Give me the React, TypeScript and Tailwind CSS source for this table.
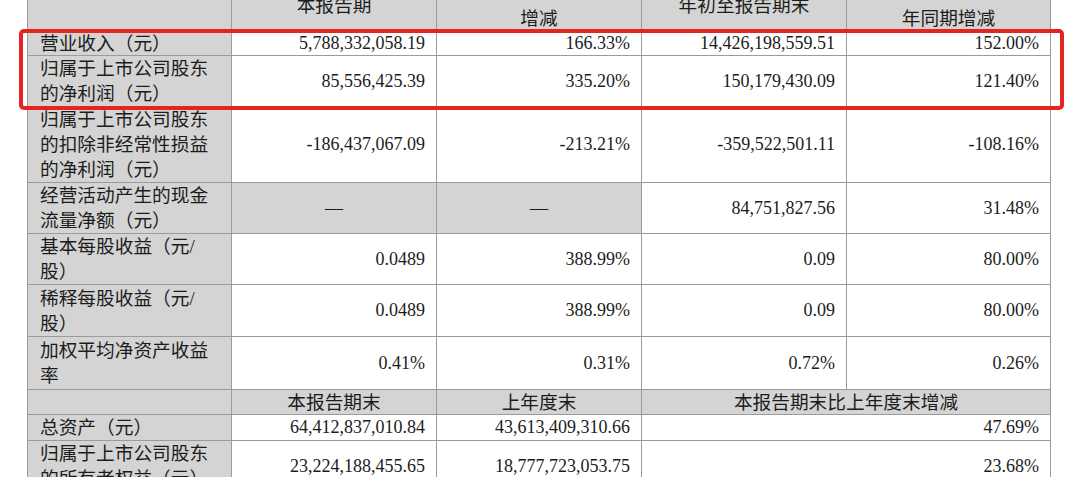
import clsx from "clsx";
import type { ReactNode } from "react";

type Align = "left" | "right" | "center";

function Cell({
  children,
  gray = false,
  align = "right",
  wide = false,
  cjk = false,
  loose = false,
}: {
  children?: ReactNode;
  gray?: boolean;
  align?: Align;
  wide?: boolean;
  cjk?: boolean;
  loose?: boolean;
}) {
  return (
    <div
      className={clsx(
        "flex items-center border-b border-r border-[#9b9b9b] whitespace-pre-line",
        gray ? "bg-[#d4d4d4]" : "bg-white",
        wide && "col-span-2",
        cjk && "text-[18.7px]",
        loose && "leading-[28px]",
        align === "left" && "justify-start pl-[12px] text-left",
        align === "center" && "justify-center text-center",
        align === "right" && "justify-end pr-[11px] text-right"
      )}
    >
      <span>{children}</span>
    </div>
  );
}

function Label({ children }: { children: ReactNode }) {
  return (
    <Cell gray cjk align="left">
      {children}
    </Cell>
  );
}

function Head({
  children,
  wide = false,
  loose = false,
}: {
  children?: ReactNode;
  wide?: boolean;
  loose?: boolean;
}) {
  return (
    <Cell gray cjk align="center" wide={wide} loose={loose}>
      {children}
    </Cell>
  );
}

export default function App() {
  return (
    <div className="relative h-[477px] w-[1080px] overflow-hidden bg-white font-['Liberation_Serif','Noto_Sans_CJK_SC',serif] text-[18px] leading-[25px] text-[#1c1c1c]">
      <div className="-mt-[20px] ml-[27px] grid w-[1024px] grid-cols-[204px_205px_205px_205px_204px] grid-rows-[51px_25px_51px_76px_51px_51px_52px_53px_25px_26px_51px] border-l border-[#9b9b9b]">
        {/* header, top part is cut off by the screenshot */}
        <Head />
        <Head>本报告期</Head>
        <Head loose>{"本报告期比上年同期\n增减"}</Head>
        <Head>年初至报告期末</Head>
        <Head loose>{"年初至报告期末比上\n年同期增减"}</Head>

        <Label>营业收入（元）</Label>
        <Cell>5,788,332,058.19</Cell>
        <Cell>166.33%</Cell>
        <Cell>14,426,198,559.51</Cell>
        <Cell>152.00%</Cell>

        <Label>{"归属于上市公司股东\n的净利润（元）"}</Label>
        <Cell>85,556,425.39</Cell>
        <Cell>335.20%</Cell>
        <Cell>150,179,430.09</Cell>
        <Cell>121.40%</Cell>

        <Label>{"归属于上市公司股东\n的扣除非经常性损益\n的净利润（元）"}</Label>
        <Cell>-186,437,067.09</Cell>
        <Cell>-213.21%</Cell>
        <Cell>-359,522,501.11</Cell>
        <Cell>-108.16%</Cell>

        <Label>{"经营活动产生的现金\n流量净额（元）"}</Label>
        <Cell gray align="center">—</Cell>
        <Cell gray align="center">—</Cell>
        <Cell>84,751,827.56</Cell>
        <Cell>31.48%</Cell>

        <Label>{"基本每股收益（元/\n股）"}</Label>
        <Cell>0.0489</Cell>
        <Cell>388.99%</Cell>
        <Cell>0.09</Cell>
        <Cell>80.00%</Cell>

        <Label>{"稀释每股收益（元/\n股）"}</Label>
        <Cell>0.0489</Cell>
        <Cell>388.99%</Cell>
        <Cell>0.09</Cell>
        <Cell>80.00%</Cell>

        <Label>{"加权平均净资产收益\n率"}</Label>
        <Cell>0.41%</Cell>
        <Cell>0.31%</Cell>
        <Cell>0.72%</Cell>
        <Cell>0.26%</Cell>

        {/* second block header */}
        <Head />
        <Head>本报告期末</Head>
        <Head>上年度末</Head>
        <Head wide>本报告期末比上年度末增减</Head>

        <Label>总资产（元）</Label>
        <Cell>64,412,837,010.84</Cell>
        <Cell>43,613,409,310.66</Cell>
        <Cell wide>47.69%</Cell>

        <Label>{"归属于上市公司股东\n的所有者权益（元）"}</Label>
        <Cell>23,224,188,455.65</Cell>
        <Cell>18,777,723,053.75</Cell>
        <Cell wide>23.68%</Cell>
      </div>

      {/* red highlight box */}
      <div className="pointer-events-none absolute left-[19px] top-[29px] h-[81px] w-[1045px] rounded-[5px] border-4 border-[#e5231f]" />
    </div>
  );
}
